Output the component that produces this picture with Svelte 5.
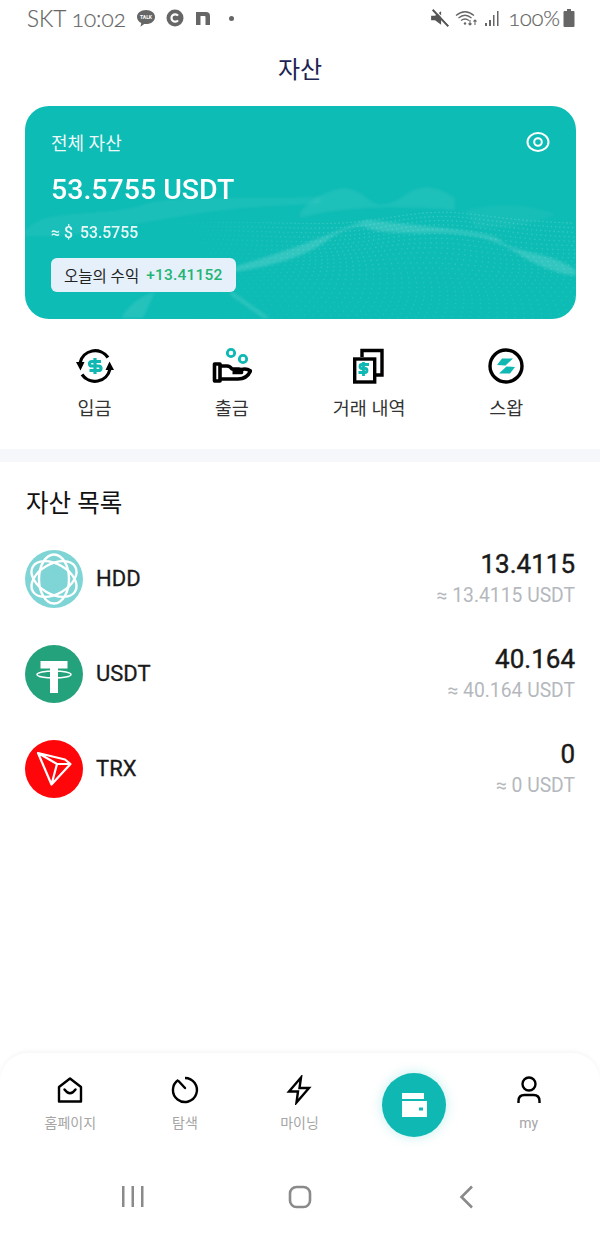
<script>
	const actions = ['입금', '출금', '거래 내역', '스왑'];
	const assets = [
		{ name: 'HDD', amount: '13.4115', usdt: '≈ 13.4115 USDT' },
		{ name: 'USDT', amount: '40.164', usdt: '≈ 40.164 USDT' },
		{ name: 'TRX', amount: '0', usdt: '≈ 0 USDT' }
	];

	// dotted terrain on the card
	const dots = [];
	for (let row = 0; row < 24; row++) {
		const t = row / 23;
		const y0 = 118 + t * 94;
		const step = 4 + t * 5;
		for (let x = 130; x < 550; x += step) {
			const bump = 12 * Math.exp(-Math.pow((x - 410) / 70, 2)) * (1 - t);
			const y = y0 - bump + Math.sin(x / 45 + row / 3) * 1.5;
			const fade = Math.min(1, (x - 130) / 170);
			dots.push({ x, y, o: (0.08 + 0.1 * (1 - t)) * fade });
		}
	}
</script>

<div class="page">
	<div class="status">
		<div class="status-left">
			<span class="clock">SKT 10:02</span>
			<svg width="20" height="19" viewBox="0 0 20 19">
				<path d="M10 1C4.800 1 1 4 1 8c0 2.600 1.700 4.700 4.200 6l-.7 3.800L8.200 15c.6.100 1.200.100 1.800.100 5.200 0 9-3.100 9-7.100S15.200 1 10 1z" fill="#666" />
				<text x="10" y="10" class="talk">TALK</text>
			</svg>
			<svg width="18" height="18" viewBox="0 0 18 18">
				<circle cx="9" cy="9" r="8.500" fill="#666" />
				<path d="M12 6.600A3.700 3.700 0 1 0 12 11.400" fill="none" stroke="#fff" stroke-width="2.200" />
			</svg>
			<svg class="n-icon" width="16" height="16" viewBox="0 0 16 16">
				<path d="M1 15V2h10q4 0 4 4v9h-4.500V7q0-1-1-1h-4v9z" fill="#666" />
			</svg>
			<span class="dot"></span>
		</div>
		<div class="status-right">
			<svg width="20" height="20" viewBox="0 0 18 18">
				<path d="M1 7h3.500L10 3v12l-5.500-4H1z" fill="#555" />
				<path d="M2.500 1.500 16.500 16.500" stroke="#555" stroke-width="2" />
				<path d="M4 1 17.500 15.500" stroke="#fff" stroke-width="1" />
			</svg>
			<svg width="24" height="18" viewBox="0 0 24 18" fill="none" stroke="#666" stroke-width="1.300">
				<path d="M1 6.500Q10-1 19 6.500M3.500 9Q10 3.500 16.500 9M6 11.500q4-3 8 0" />
				<circle cx="10" cy="14.500" r="1.200" fill="#666" stroke="none" />
				<path d="M15 11v5M13.500 14.500l1.500 1.500 1.500-1.500M20 16v-5M18.500 12.500l1.500-1.500 1.500 1.500" stroke-width="1.100" />
			</svg>
			<svg width="17" height="18" viewBox="0 0 17 18" fill="#666">
				<rect x="1" y="14" width="2" height="3" />
				<rect x="5" y="11" width="2" height="6" />
				<rect x="9" y="6" width="1.500" height="11" />
				<rect x="13" y="2" width="1.500" height="15" />
			</svg>
			<span class="battery-text">100%</span>
			<svg class="battery" width="12" height="18" viewBox="0 0 12 18" fill="#666">
				<rect x="4" y="0" width="4" height="2" />
				<rect x="0.500" y="2" width="11" height="16" rx="1" />
			</svg>
		</div>
	</div>

	<header>자산</header>

	<section class="card">
		<svg class="waves" viewBox="0 0 551 213">
			<defs>
				<filter id="soft"><feGaussianBlur stdDeviation="1.600" /></filter>
			</defs>
			<g fill="#fff">
				{#each dots as d}
					<circle cx={d.x} cy={d.y} r="0.800" opacity={d.o} />
				{/each}
			</g>
			<g fill="#fff" filter="url(#soft)">
				<path d="M0 124Q14 112 30 110T75 106T120 98T210 92T295 90L295 98Q220 100 170 108T80 124T0 130z" opacity="0.060" />
				<path d="M275 106Q290 90 308 84T342 92T380 89T430 92L430 104Q380 100 342 102T275 112z" opacity="0.070" />
				<path d="M205 162Q260 146 300 130T342 114T408 121T475 134T508 147T551 164L551 170Q520 166 490 146T408 127T342 122T300 136T210 166z" opacity="0.160" />
				<path d="M440 104Q490 92 532 108Q500 124 450 122z" opacity="0.040" />
				<path d="M96 212Q108 192 130 186L118 212z" opacity="0.100" />
				<path d="M208 186L245 212L238 212L204 188z" opacity="0.130" />
			</g>
		</svg>
		<div class="card-top">
			<span class="total-label">전체 자산</span>
			<svg width="24" height="20" viewBox="0 0 24 20" fill="none" stroke="#fff">
				<ellipse cx="12" cy="10" rx="10.500" ry="9" stroke-width="2" />
				<circle cx="12" cy="10" r="3.800" stroke-width="2" />
			</svg>
		</div>
		<div class="total">53.5755 USDT</div>
		<div class="fiat"><span>≈ $</span><span>53.5755</span></div>
		<div class="profit">
			<span>오늘의 수익</span>
			<b>+13.41152</b>
		</div>
	</section>

	<nav class="actions">
		{#each actions as label, i}
			<div class="action">
				<svg width="40" height="40" viewBox="0 0 40 40">
					{#if i === 0}
						<g fill="none" stroke="#000" stroke-width="3.200">
							<path d="M5 17A15.500 15.500 0 0 1 33 11.500" />
							<path d="M35 23A15.500 15.500 0 0 1 7 28.500" />
						</g>
						<path d="M1 16h8.500l-4 8.500zM39 24h-8.500l4-8.500z" fill="#000" />
						<path d="M26 15.500h-9q-2.500 0-2.500 2.300t2.500 2.200h6.500q2.500 0 2.500 2.300t-2.500 2.200h-9M20 12v16" fill="none" stroke="#0fb8b2" stroke-width="3.200" />
					{:else if i === 1}
						<circle cx="19" cy="7" r="3.700" fill="none" stroke="#0fb8b2" stroke-width="2.800" />
						<circle cx="31" cy="13" r="3.700" fill="none" stroke="#0fb8b2" stroke-width="2.800" />
						<g fill="none" stroke="#000" stroke-width="3.600" stroke-linejoin="round">
							<path d="M2.500 18h5.500v17H2.500z" />
							<path d="M8 20h7q3 0 5 3h7q3 0 2.500 3.500h-9" />
							<path d="M8 33h18q9 0 12.500-8-4-3-9-1.500" />
						</g>
					{:else if i === 2}
						<path d="M13 11V4.500h20V29h-6" fill="none" stroke="#000" stroke-width="3.400" />
						<rect x="5.700" y="13" width="20" height="23" fill="#fff" stroke="#000" stroke-width="3.400" />
						<path d="M20 18.500h-7q-2 0-2 2t2 2h3q2 0 2 2t-2 2h-6.500M14.500 16v14" fill="none" stroke="#0fb8b2" stroke-width="2.800" />
					{:else}
						<circle cx="20" cy="20" r="16" fill="none" stroke="#000" stroke-width="3.400" />
						<path d="M11 19l5-6.500h11l-7.500 7zM29 21l-5 6.500H13l7.500-7z" fill="#0fb8b2" />
					{/if}
				</svg>
				<span>{label}</span>
			</div>
		{/each}
	</nav>

	<div class="divider"></div>

	<main>
		<h2>자산 목록</h2>
		{#each assets as a}
			<div class="row">
				<svg class="coin" viewBox="0 0 58 58">
					{#if a.name === 'HDD'}
						<circle cx="29" cy="29" r="29" fill="#7fd5d6" />
						<g fill="none" stroke="#fff" stroke-width="2.400">
							<ellipse cx="29" cy="29" rx="15" ry="24.500" />
							<ellipse cx="29" cy="29" rx="15" ry="24.500" transform="rotate(60 29 29)" />
							<ellipse cx="29" cy="29" rx="15" ry="24.500" transform="rotate(120 29 29)" />
						</g>
					{:else if a.name === 'USDT'}
						<circle cx="29" cy="29" r="29" fill="#23a27b" />
						<path d="M15.500 16h27v7.500H33V48h-8V23.500h-9.500z" fill="#fff" />
						<ellipse cx="29" cy="29.500" rx="17" ry="3.600" fill="none" stroke="#fff" stroke-width="1.500" />
					{:else}
						<circle cx="29" cy="29" r="29" fill="#ff060a" />
						<path d="M13 13l27 6.500 5.500 4.500L26.500 44.500zM13 13l19 11-5.500 20.500M32 24l13.500 0" fill="none" stroke="#fff" stroke-width="2.200" stroke-linejoin="round" />
					{/if}
				</svg>
				<span class="name">{a.name}</span>
				<div class="values">
					<div class="amount">{a.amount}</div>
					<div class="usdt">{a.usdt}</div>
				</div>
			</div>
		{/each}
	</main>

	<footer>
		<div class="tabs">
			<div class="tab">
				<svg width="30" height="30" viewBox="0 0 30 30" fill="none" stroke="#000" stroke-width="2.400">
					<path d="M4 26.500V12L15 3.500 26 12v14.500z" stroke-linejoin="round" />
					<path d="M9.500 14.500q5.500 7.500 11 0" stroke-linecap="round" />
				</svg>
				<span>홈페이지</span>
			</div>
			<div class="tab">
				<svg width="30" height="30" viewBox="0 0 30 30" fill="none" stroke="#000" stroke-width="2.400">
					<path d="M8.300 5A12 12 0 1 0 15 3" />
					<path d="M8.500 6l6.500 7" stroke-linecap="round" />
				</svg>
				<span>탐색</span>
			</div>
			<div class="tab">
				<svg width="30" height="30" viewBox="0 0 30 30" fill="none" stroke="#000" stroke-width="2.400">
					<path d="M17 2.500 5 16.500h9l-1.500 11L25 13h-9.500z" stroke-linejoin="miter" />
				</svg>
				<span>마이닝</span>
			</div>
			<div class="tab">
				<div class="wallet">
					<svg width="28" height="26" viewBox="0 0 28 26" fill="#fff">
						<rect x="2" y="1" width="22" height="6" />
						<path d="M2 9h25v16H2zM19 15.500v3h4v-3z" fill-rule="evenodd" />
					</svg>
				</div>
			</div>
			<div class="tab">
				<svg width="30" height="30" viewBox="0 0 30 30" fill="none" stroke="#000" stroke-width="2.400">
					<circle cx="15" cy="9" r="6.500" />
					<path d="M4.500 28v-2q0-6 6-6h9q6 0 6 6v2" />
				</svg>
				<span>my</span>
			</div>
		</div>
		<div class="sysnav">
			<svg width="24" height="24" viewBox="0 0 24 24" fill="#8a8a8a">
				<rect x="1" y="1" width="2.500" height="21" />
				<rect x="10.500" y="1" width="2.500" height="21" />
				<rect x="20" y="1" width="2.500" height="21" />
			</svg>
			<svg width="24" height="24" viewBox="0 0 24 24" fill="none" stroke="#8a8a8a" stroke-width="2.600">
				<rect x="2" y="2" width="20" height="20" rx="6.500" />
			</svg>
			<svg width="24" height="24" viewBox="0 0 24 24" fill="none" stroke="#8a8a8a" stroke-width="2.600">
				<path d="M17 1.500 6.500 12 17 22.500" />
			</svg>
		</div>
	</footer>
</div>

<style>
	:global(body) {
		background: #fff;
		font-family: Roboto, 'Noto Sans CJK KR', sans-serif;
	}

	.page {
		width: 600px;
		min-height: 1233px;
		display: flex;
		flex-direction: column;
		background: #fff;
	}

	.status {
		height: 36px;
		padding: 0 27px;
		display: flex;
		justify-content: space-between;
		align-items: center;
		color: #666;
	}

	.status-left,
	.status-right {
		display: flex;
		align-items: center;
	}

	.status-left svg {
		margin-left: 10px;
	}

	.status-left .n-icon {
		margin-left: 11px;
	}

	.clock,
	.battery-text {
		font-family: Lato, sans-serif;
		font-weight: 300;
		-webkit-text-stroke: 0.2px #666;
		font-variant-numeric: oldstyle-nums;
	}

	.clock {
		font-size: 22.500px;
	}

	.battery-text {
		font-size: 21.500px;
		margin-left: 2px;
	}

	.talk {
		font: 700 5px Roboto, sans-serif;
		fill: #fff;
		text-anchor: middle;
	}

	.dot {
		width: 5px;
		height: 5px;
		margin-left: 18px;
		border-radius: 50%;
		background: #666;
	}

	.status-right {
		gap: 5px;
		margin-right: -2px;
	}

	.battery {
		margin-left: -2px;
	}

	header {
		height: 70px;
		padding-bottom: 8px;
		box-sizing: border-box;
		display: flex;
		align-items: center;
		justify-content: center;
		font-size: 24px;
		color: #1b2452;
	}

	.card {
		position: relative;
		height: 213px;
		margin: 0 24px 0 25px;
		padding: 23px 26px 0;
		box-sizing: border-box;
		border-radius: 24px;
		overflow: hidden;
		background: #0dbcb5;
		color: #fff;
	}

	.waves {
		position: absolute;
		left: 0;
		top: 0;
		width: 100%;
		height: 100%;
	}

	.card-top,
	.total,
	.fiat,
	.profit {
		position: relative;
	}

	.card-top {
		display: flex;
		justify-content: space-between;
		align-items: center;
		height: 26px;
		font-size: 18px;
		color: #eefafa;
	}

	.total {
		margin-top: 19px;
		font-size: 28.500px;
		line-height: 32px;
		font-weight: 500;
	}

	.fiat {
		margin-top: 17px;
		display: flex;
		gap: 7px;
		font-size: 15.800px;
		line-height: 20px;
		font-weight: 500;
		color: #e8f9f8;
	}

	.profit {
		display: inline-flex;
		align-items: center;
		gap: 7px;
		height: 34px;
		margin-top: 15px;
		padding: 0 13px;
		border-radius: 6px;
		background: #e6f0fb;
		font-size: 15.500px;
		color: #222;
	}

	.profit b {
		font-weight: 500;
		letter-spacing: 0.2px;
		color: #22b573;
	}

	.actions {
		display: grid;
		grid-template-columns: repeat(4, 1fr);
		padding: 27px 25px 0 26px;
		height: 130px;
		box-sizing: border-box;
	}

	.action {
		display: flex;
		flex-direction: column;
		align-items: center;
		gap: 10px;
		font-size: 18.500px;
		line-height: 26px;
		color: #333;
	}

	.divider {
		height: 13px;
		background: #f5f7fa;
	}

	main {
		flex: 1;
		padding: 0 25px 0 26px;
	}

	h2 {
		margin: 25px 0 10px;
		font-size: 24.500px;
		line-height: 34px;
		font-weight: 400;
		color: #111;
	}

	.row {
		display: flex;
		align-items: center;
		height: 95px;
	}

	.coin {
		width: 58px;
		height: 58px;
		margin-right: 13px;
		margin-left: -1px;
	}

	.name {
		font-size: 22px;
		color: #1a1a1a;
		-webkit-text-stroke: 0.3px #1a1a1a;
	}

	.values {
		margin-left: auto;
		text-align: right;
	}

	.amount {
		font-size: 26px;
		line-height: 30px;
		color: #1a1a1a;
		-webkit-text-stroke: 0.4px #1a1a1a;
	}

	.usdt {
		margin-top: 5px;
		font-size: 19.300px;
		line-height: 24px;
		color: #b4b8bd;
	}

	footer {
		border-radius: 28px 28px 0 0;
		box-shadow: 0 -2px 4px rgba(0, 0, 0, 0.04);
		background: #fff;
	}

	.tabs {
		display: grid;
		grid-template-columns: repeat(5, 1fr);
		height: 112px;
		padding: 0 14px 0 13px;
		box-sizing: border-box;
	}

	.tab {
		display: flex;
		flex-direction: column;
		align-items: center;
		padding-top: 22px;
		gap: 8px;
		font-size: 14px;
		line-height: 20px;
		color: #a5a5a5;
	}

	.wallet {
		width: 64px;
		height: 64px;
		margin-top: -2px;
		display: flex;
		align-items: center;
		justify-content: center;
		border-radius: 50%;
		background: #0fb8b2;
		box-shadow: 0 0 12px rgba(15, 184, 178, 0.25);
	}

	.sysnav {
		display: grid;
		grid-template-columns: repeat(3, 167px);
		justify-content: center;
		justify-items: center;
		height: 68px;
		padding-top: 20px;
		box-sizing: border-box;
	}
</style>
